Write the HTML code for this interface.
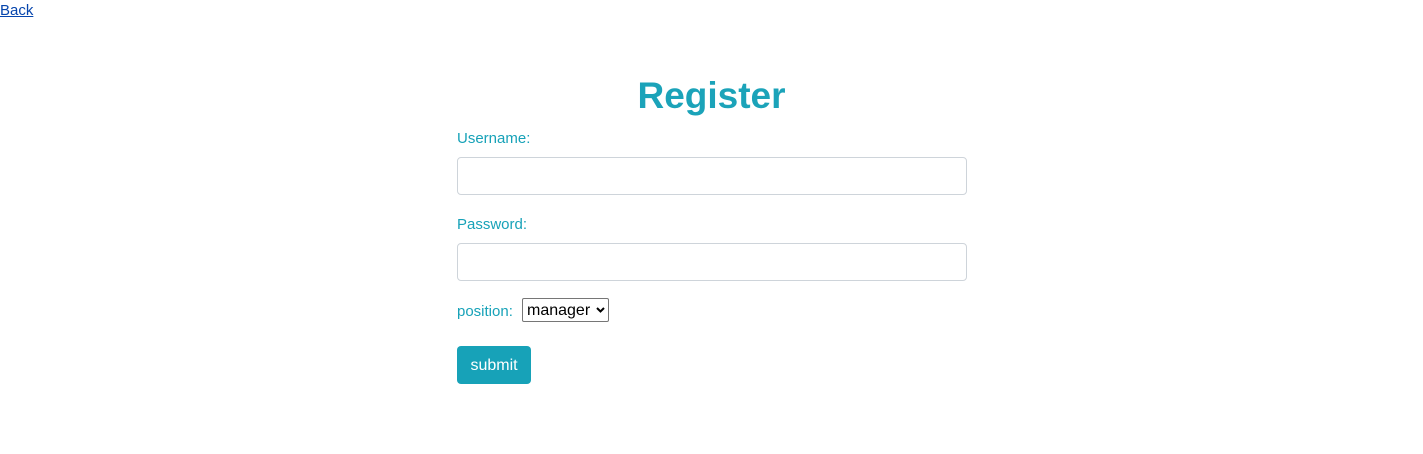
<!DOCTYPE html>
<html><head><style>
body{margin:0;font-family:"Liberation Sans",sans-serif;background:#fff;color:#17a2b8;}
a.back{position:absolute;left:0;top:1px;font-size:15px;color:#0645ad;line-height:20px;}
h1{position:absolute;left:0;width:1423px;text-align:center;top:73px;margin:0;font-size:37px;font-weight:bold;line-height:46px;color:#1ba3b9;}
.lbl{position:absolute;left:457px;font-size:15px;line-height:20px;}
.inp{position:absolute;left:457px;width:508px;height:36px;border:1px solid #ced4da;border-radius:4px;}
.sel{position:absolute;left:522px;top:298px;width:87px;height:24px;border:1px solid #767676;border-radius:2px;color:#000;font-size:16px;line-height:23px;padding-left:4px;box-sizing:border-box;}
.btn{position:absolute;left:457px;top:346px;width:74px;height:38px;background:#17a2b8;border-radius:4px;color:#fff;font-size:16px;line-height:39px;text-align:center;}
</style></head><body>
<a class="back" href="#">Back</a>
<h1>Register</h1>
<div class="lbl" style="top:129px">Username:</div>
<div class="inp" style="top:157px"></div>
<div class="lbl" style="top:215px">Password:</div>
<div class="inp" style="top:243px"></div>
<div class="lbl" style="top:302px">position:</div>
<div class="sel">manager <svg style="position:absolute;right:3px;top:8px" width="9" height="6" viewBox="0 0 9 6"><path d="M1 1l3.5 3.5L8 1" stroke="#000" stroke-width="2" fill="none"/></svg></div>
<div class="btn">submit</div>
</body></html>
